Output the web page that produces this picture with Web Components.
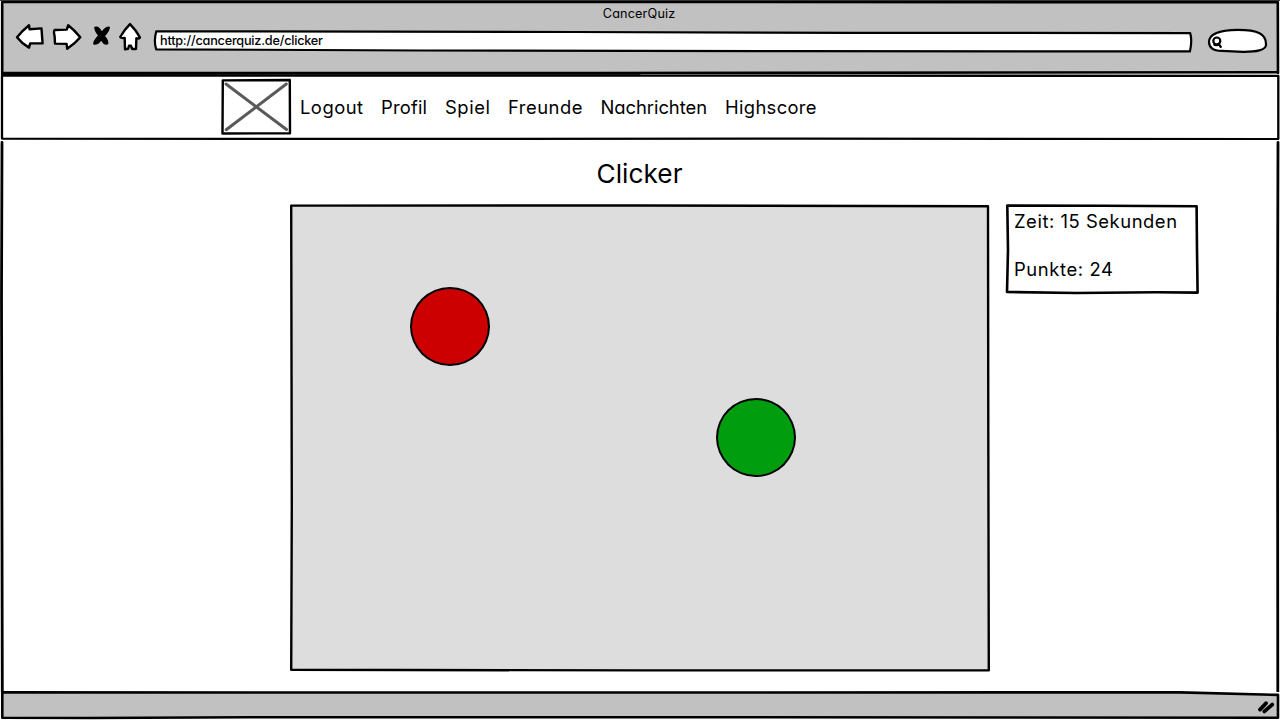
<!DOCTYPE html>
<html lang="de">
<head>
<meta charset="utf-8">
<title>CancerQuiz</title>
<style>
body{margin:0;background:#fff;font-family:Inter,"Open Sans",sans-serif;color:#000;font-feature-settings:"cv11";overflow:hidden}
</style>
</head>
<body>
<quiz-window></quiz-window>
<script>
const define = (name, html, ready) => {
  const t = document.createElement('template');
  t.innerHTML = html;
  customElements.define(name, class extends HTMLElement {
    constructor() {
      super();
      this.attachShadow({mode: 'open'}).append(t.content.cloneNode(true));
    }
    connectedCallback() { if (ready) ready(this, this.shadowRoot); }
  });
};
const ink = 'svg.ink{position:absolute;left:0;top:0;width:100%;height:100%;overflow:visible;fill:none;stroke:#000;stroke-width:2.6;stroke-linecap:round;stroke-linejoin:round;pointer-events:none}';

// A run of text whose letters are spread over the width given in "w".
define('fit-text', `<style>:host{display:block;white-space:nowrap;line-height:1.25;flex:none}</style><span><slot></slot></span>`, (el, root) => {
  const w = +el.getAttribute('w'), span = root.querySelector('span');
  el.style.width = w + 'px';
  const n = el.textContent.length;
  span.style.letterSpacing = ((w - span.getBoundingClientRect().width) / (n - 1)) + 'px';
});

define('nav-icons', `<style>:host{display:block;width:128px;height:30px;flex:none}svg{display:block;overflow:visible;fill:#fff;stroke:#000;stroke-width:2.4;stroke-linejoin:round;stroke-linecap:round}</style>
<svg width="128" height="30" viewBox="15 22 128 30">
<path d="M17 37.2Q23 30 29 25.2L29.6 29.3 41.5 28.4Q42 36 42.6 43.3L30.2 43.4 29 47.6Q22 43.6 17 37.2Z"/>
<path d="M80.3 37.2Q74 29.7 68.2 25.2L66.8 29.6 54.6 30Q53.4 31.5 54.6 36L55 43.6 66.6 43.9 67.2 48.8Q75 43.5 80.3 37.2Z"/>
<path d="M94.8 27.4Q98.6 25.8 101.8 32.4Q105 27 109.2 27Q109.8 30 104.2 36Q108.6 41 107.7 43.8Q104.5 45.5 101.3 39.6Q98 44.5 94 44.2Q92.8 42 98.8 35.5Q95 31 94.8 27.4Z" fill="#000" stroke-width="1.2"/>
<path d="M130 24.1Q124.5 29.5 120.2 37Q121 38.5 124.7 38L125 49.2 128.2 48.8 129 45.8 131 45.8 132.2 49 136 49 136.4 38.3Q139.6 39 140 37.5Q136 30 130 24.1Z"/>
</svg>`);

define('address-bar', `<style>:host{display:flex;position:relative;box-sizing:border-box;width:1040px;height:24px;padding:3.5px 0 0 7px;font-size:12.7px;font-weight:500;flex:none}${ink}svg.ink{fill:#fff;stroke-width:2.2}fit-text{position:relative}</style>
<svg class="ink" viewBox="0 0 1040 24"><path d="M3.3 2.3 420 3 700 3.8 1037.2 4.1Q1039.4 12 1036.9 22.4L640 22.2 270 21.5 3.2 20.3Q.5 12 3.3 2.3Z"/></svg>
<fit-text w="163">http://cancerquiz.de/clicker</fit-text>`);

define('search-pill', `<style>:host{display:block;width:62px;height:28px;flex:none}svg{display:block;overflow:visible;fill:#fff;stroke:#000;stroke-width:2.2;stroke-linecap:round}</style>
<svg width="62" height="28" viewBox="1206 27 62 28"><path d="M1209 42C1209 33.5 1220 30 1238 29.8C1258 29.8 1266.1 34 1266 44C1267 50.5 1255 51.9 1243 51.8L1222 50.9C1212.5 51 1209 47 1209 42Z"/><circle cx="1216.8" cy="41" r="3.5" stroke-width="2.2"/><path d="m1218.5 44 2.2 2.7m-6.2-2 2.5.3" stroke-width="2.4"/></svg>`);

define('browser-bar', `<style>:host{display:grid;grid-template-rows:22px 30px;position:relative;height:75px;box-sizing:border-box;background:linear-gradient(#c1c1c1,#c1c1c1) 2px 1px/1276px 72px no-repeat}
${ink}.title{display:flex;justify-content:center;padding:6px 2px 0 0;font-size:12.7px;position:relative}.row{display:flex;padding-left:15px;position:relative}address-bar{margin:7px 0 0 10px}search-pill{margin:5px 0 0 13px}</style>
<svg class="ink" viewBox="0 0 1280 75"><path d="M0 .5H1280" stroke="#444" stroke-width="1"/><path d="M2.2 75V2L1277.8 2.1 1278 73M2.2 73.1 600 73 1278 72.3"/><path d="M2 74.2 640 74.1" stroke-width="1.4"/></svg>
<div class="title"><fit-text w="72.5">CancerQuiz</fit-text></div>
<div class="row"><nav-icons></nav-icons><address-bar></address-bar><search-pill></search-pill></div>`);

define('logo-box', `<style>:host{display:block;width:70px;height:56px;flex:none}svg{display:block;overflow:visible;fill:#fff;stroke:#000;stroke-linecap:round;stroke-linejoin:round}</style>
<svg width="70" height="56" viewBox="221 79 70 56"><path d="M222.8 80.4 289.8 80 290 133.2 222.5 133.5Z" stroke-width="2.4"/><path d="M226 84 286.5 129.5M286.3 84 226.2 129.7" stroke="#5a5a5a" stroke-width="3"/></svg>`);

define('site-nav', `<style>:host{display:flex;position:relative;box-sizing:border-box;height:65px;padding:4px 0 0 221px;background:#fff;font-size:18.4px}${ink}
nav{display:flex;padding:17px 0 0 9px;gap:18px}</style>
<svg class="ink" viewBox="0 0 1280 65"><path d="M2.2 .5 1278.3 .8V63.8M2 .8V63.6L340 64 800 63.7 1278 64.2" stroke-width="2.3"/></svg>
<logo-box></logo-box><nav><slot></slot></nav>`);

define('score-panel', `<style>:host{display:grid;position:relative;width:192px;height:89px;box-sizing:border-box;padding:5px 0 0 8px;grid-auto-rows:48px;font-size:18.4px;align-items:start}${ink}</style>
<svg class="ink" viewBox="0 0 192 89"><path d="M1.3 .6 96 .8 190.6 1.2 191 45 191.6 87.6 150 87.3 70 88 1 87 2 45Z"/></svg>
<slot></slot>`);

define('click-target', `<style>:host{display:block;position:absolute;box-sizing:border-box;width:80px;height:79px;border:2px solid #000;border-radius:50%}</style>`);

define('click-field', `<style>:host{display:block;position:relative;width:700px;height:467px;background:linear-gradient(#ddd,#ddd) 1px 1px/698px 464px no-repeat}${ink}.r{left:120px;top:82px;background:#c00}.g{left:426px;top:193px;background:#009e0f}</style>
<svg class="ink" viewBox="0 0 700 467"><path d="M1.2 .6 350 .5 698 1.2 698.3 230 698.8 465.3 350 465.4 1.2 464.8 1.8 300Z" stroke-width="2.4"/></svg>
<click-target class="r"></click-target><click-target class="g"></click-target>`);

define('quiz-stage', `<style>:host{display:grid;grid-template-columns:700px 192px;grid-template-rows:65px 1fr;column-gap:16px;box-sizing:border-box;height:552px;padding-left:290px;position:relative;background:#fff}${ink}
.t{display:flex;justify-content:center;padding:18px 1px 0 0;font-size:26.2px;grid-column:1}click-field{grid-row:2}score-panel{grid-row:2;grid-column:2}</style>
<svg class="ink" viewBox="0 0 1280 552"><path d="M2 2.5 1.5 160 2 400 2.3 552M1278 2.5 1277.5 200 1277.8 554" stroke-width="2.8"/></svg>
<div class="t"><fit-text w="86">Clicker</fit-text></div><click-field></click-field>
<score-panel><fit-text w="163">Zeit: 15 Sekunden</fit-text><fit-text w="99">Punkte: 24</fit-text></score-panel>`);

define('status-bar', `<style>:host{display:block;position:relative;height:28px;background:#fff}${ink}</style>
<svg class="ink" viewBox="0 0 1280 28"><path d="M2.3 .4 400 .5 1180 .4 1278 2.9V25.7L600 25.2 250 25.2 90 26 2.3 25.8Z" fill="#c1c1c1"/><path d="M1260 17.6 1266 11.2M1264.4 19.4 1272.2 12.6" stroke-width="3.8"/></svg>`);

define('quiz-window', `<style>:host{display:grid;grid-template-rows:75px 65px 552px 28px;width:1280px;height:720px}</style>
<browser-bar></browser-bar>
<site-nav><fit-text w="63">Logout</fit-text><fit-text w="46">Profil</fit-text><fit-text w="45">Spiel</fit-text><fit-text w="74.5">Freunde</fit-text><fit-text w="106.5">Nachrichten</fit-text><fit-text w="91.5">Highscore</fit-text></site-nav>
<quiz-stage></quiz-stage><status-bar></status-bar>`);
</script>
</body>
</html>
